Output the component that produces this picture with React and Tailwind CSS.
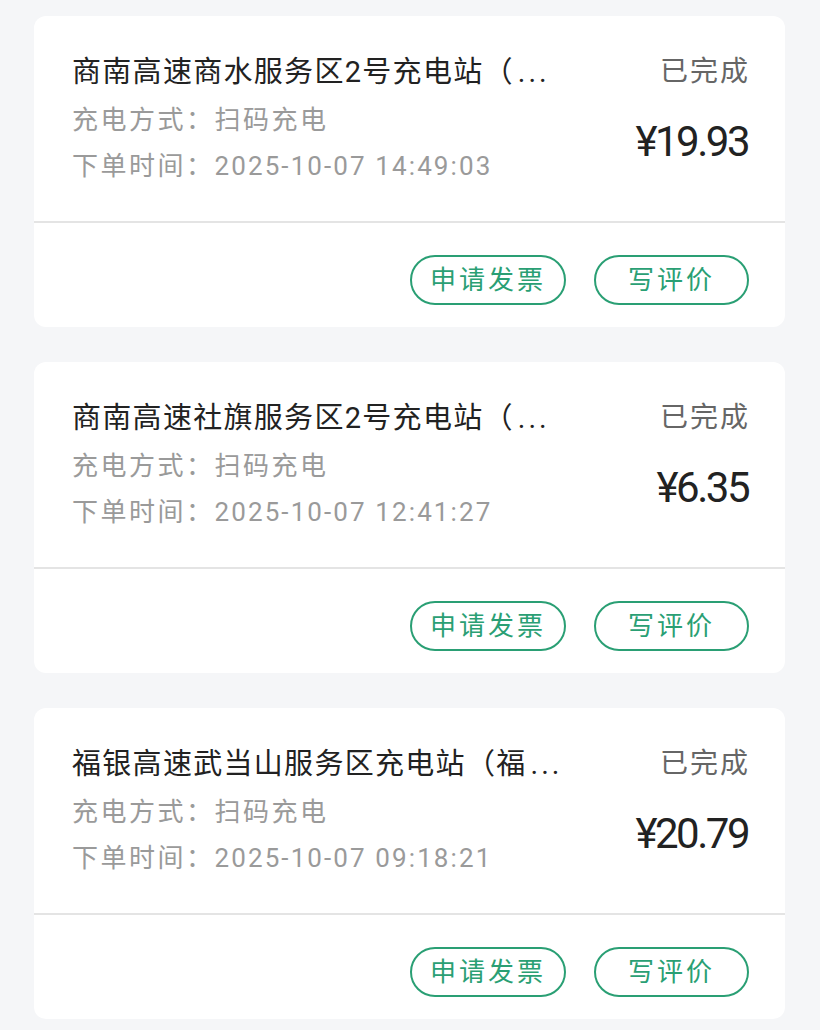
import React from 'react'

const orders = [
  { id: 1, name: '商南高速商水服务区2号充电站（', method: '扫码充电', time: '2025-10-07 14:49:03', status: '已完成', price: '¥19.93' },
  { id: 2, name: '商南高速社旗服务区2号充电站（', method: '扫码充电', time: '2025-10-07 12:41:27', status: '已完成', price: '¥6.35' },
  { id: 3, name: '福银高速武当山服务区充电站（福', method: '扫码充电', time: '2025-10-07 09:18:21', status: '已完成', price: '¥20.79' },
]

const OrderCard = ({ order }) => {
  return (
    <div className="bg-white rounded-[12px] h-[311px] flex flex-col">
      <div className="flex flex-row justify-between pt-[36px] pl-[38px] pr-[37px] h-[205px]">
        <div className="flex flex-col">
          <div className="text-[29px] leading-[40px] tracking-[1.3px] text-[#222222] whitespace-nowrap">
            {order.name}<span className="tracking-[3px] ml-[4px]">...</span>
          </div>
          <div className="text-[26px] leading-[46px] tracking-[2.5px] text-[#9a9a9a] mt-[5px]">充电方式：{order.method}</div>
          <div className="text-[26px] leading-[46px] tracking-[2.5px] text-[#9a9a9a] whitespace-nowrap">
            下单时间：<span className="tracking-[2.1px]">{order.time}</span>
          </div>
        </div>
        <div className="flex flex-col items-end">
          <div className="text-[28px] leading-[40px] tracking-[2px] text-[#666666] -mr-[2px]">{order.status}</div>
          <div className="text-[42px] leading-[50px] tracking-[-2.5px] text-[#222222] mt-[25px]">{order.price}</div>
        </div>
      </div>
      <div className="h-[2px] bg-[#e4e4e4]"></div>
      <div className="flex flex-row justify-end gap-[28px] pt-[32px] pr-[36px]">
        <button className="w-[156px] h-[50px] rounded-full border-2 border-[#2a9f74] text-[#2a9f74] text-[26px] tracking-[3px] flex items-center justify-center">申请发票</button>
        <button className="w-[155px] h-[50px] rounded-full border-2 border-[#2a9f74] text-[#2a9f74] text-[26px] tracking-[3px] flex items-center justify-center">写评价</button>
      </div>
    </div>
  )
}

const App = () => {
  return (
    <div className="min-h-[1030px] bg-[#f5f6f8] pt-[16px] pl-[34px] pr-[35px] flex flex-col gap-[35px]" style={{ fontFamily: 'Roboto, "Noto Sans CJK SC", sans-serif' }}>
      {orders.map(order => (
        <OrderCard key={order.id} order={order} />
      ))}
    </div>
  )
}

export default App
